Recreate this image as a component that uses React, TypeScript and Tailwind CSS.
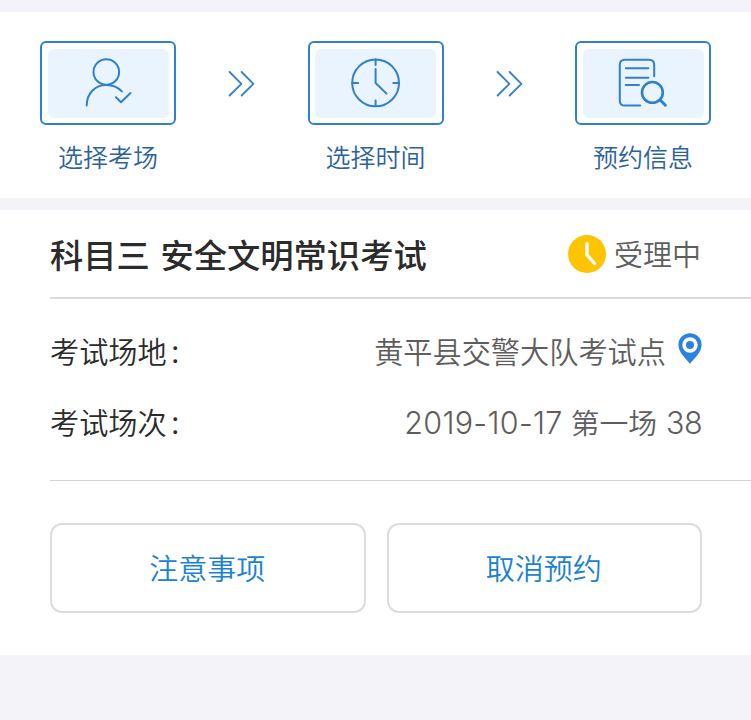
import type { ReactNode } from 'react';

function PersonIcon() {
  return (
    <svg width="120" height="68" viewBox="0 0 120 68" fill="none" stroke="#2f80cf" strokeWidth="2" strokeLinecap="round" strokeLinejoin="round">
      <circle cx="58.3" cy="23" r="12.8" />
      <path d="M38.7 56.5C38.7 44.5 47 36 58.3 36C64.5 36 70.2 38.4 73.8 42.4" />
      <path d="M68 48.2L73 53.2L82.5 44" />
    </svg>
  );
}

function ClockIcon() {
  return (
    <svg width="120" height="68" viewBox="0 0 120 68" fill="none" stroke="#2f80cf" strokeWidth="2" strokeLinecap="round" strokeLinejoin="round">
      <circle cx="59.6" cy="33.9" r="23.4" />
      <path d="M59.6 10.6V16M59.6 51.5V57M36.2 33.9H42.2M77.3 33.9H83" />
      <path d="M59.6 20V34L70.5 44.6" />
    </svg>
  );
}

function DocumentSearchIcon() {
  return (
    <svg width="120" height="68" viewBox="0 0 120 68" fill="none" stroke="#2f80cf" strokeWidth="2" strokeLinecap="round" strokeLinejoin="round">
      <path d="M71.2 27.2V16C71.2 12.8 69.2 10.8 66 10.8H42C38.8 10.8 36.8 12.8 36.8 16V51.4C36.8 54.6 38.8 56.6 42 56.6H57.2" />
      <path d="M42.8 19.3H65.4M42.8 28.7H65.4M42.8 36H56" />
      <circle cx="69.4" cy="43.4" r="10.4" strokeWidth="2.6" />
      <path d="M77.2 51L82.4 56.2" strokeWidth="3" />
    </svg>
  );
}

function StepArrow() {
  return (
    <svg className="mt-[29px]" width="27" height="28" viewBox="0 0 27 28" fill="none" stroke="#2f80cf" strokeWidth="1.8" strokeLinecap="round" strokeLinejoin="round">
      <path d="M1.6 2L13.4 13.8L1.6 25.5M13.6 2L25.4 13.8L13.6 25.5" />
    </svg>
  );
}

function Step({ label, children }: { label: string; children: ReactNode }) {
  return (
    <div className="flex w-[136px] flex-col items-center">
      <div className="h-[84px] w-full rounded-md border-2 border-[#2f80cf] p-[5.5px]">
        <div className="flex h-full items-center justify-center rounded-md bg-[#eaf4fe]">{children}</div>
      </div>
      <span className="mt-[13px] text-[25px] leading-9 font-[350] text-[#2c62a0]">{label}</span>
    </div>
  );
}

function InfoRow({ label, children }: { label: string; children: ReactNode }) {
  return (
    <div className="flex h-[71px] items-center justify-between pr-[49px] text-[29.2px] font-[350]">
      <span className="text-[#2b2b2b]">
        {label}
        <span className="ml-0.5 text-[26px]">：</span>
      </span>
      <span className="flex items-center text-[#5e5e5e]">{children}</span>
    </div>
  );
}

function ActionButton({ label }: { label: string }) {
  return (
    <button className="h-[90px] flex-1 rounded-xl border-2 border-[#dcdcdc] pr-px text-[29px] font-[350] text-[#1a82d2]">
      {label}
    </button>
  );
}

export default function App() {
  return (
    <div className="h-[720px] w-[751px] overflow-hidden bg-[#f3f3f9] pt-3 font-['Noto_Sans_CJK_SC',sans-serif]">
      <section className="flex h-[186px] items-start justify-between bg-white pt-[29px] pr-10 pl-10">
        <Step label="选择考场">
          <PersonIcon />
        </Step>
        <StepArrow />
        <Step label="选择时间">
          <ClockIcon />
        </Step>
        <StepArrow />
        <Step label="预约信息">
          <DocumentSearchIcon />
        </Step>
      </section>

      <section className="mt-3 h-[445px] bg-white pl-[50px]">
        <div className="flex h-[89px] items-center justify-between border-b-2 border-[#dcdcdc] pr-[50px]">
          <h1 className="text-[33.3px] font-medium text-[#2b2b2b] [word-spacing:3px]">科目三 安全文明常识考试</h1>
          <div className="flex items-center gap-2">
            <svg width="38" height="38" viewBox="0 0 38 38" fill="none">
              <circle cx="19" cy="19" r="19" fill="#fec400" />
              <path d="M19 8.8V20L26.5 28.5" stroke="#fff" strokeWidth="3.4" strokeLinecap="round" strokeLinejoin="round" />
            </svg>
            <span className="text-[29px] font-[350] text-[#5e5e5e]">受理中</span>
          </div>
        </div>

        <div className="h-[182px] border-b border-[#d2d2d2] pt-4">
          <InfoRow label="考试场地">
            黄平县交警大队考试点
            <svg className="mb-[3px] ml-3" width="24" height="31" viewBox="0 0 24 31">
              <path d="M12 0.3C5.4 0.3 0.4 5.4 0.4 11.8C0.4 19 7 25 12 30.8C17 25 23.6 19 23.6 11.8C23.6 5.4 18.6 0.3 12 0.3Z" fill="#2b83df" />
              <circle cx="12" cy="12" r="7.7" fill="#fff" />
              <circle cx="12" cy="12" r="4" fill="#2b83df" />
            </svg>
          </InfoRow>
          <InfoRow label="考试场次">
            <span className="mt-0.5 font-[Inter,sans-serif] text-[30.5px] font-[350] tracking-[0.3px]">2019-10-17</span>
            <span className="mr-[9px] ml-2 text-[28.8px]">第一场</span>
            <span className="mt-0.5 font-[Inter,sans-serif] text-[30.5px] font-[350] tracking-[-0.6px]">38</span>
          </InfoRow>
        </div>

        <div className="flex gap-[21px] pt-[42px] pr-[49px]">
          <ActionButton label="注意事项" />
          <ActionButton label="取消预约" />
        </div>
      </section>
    </div>
  );
}
